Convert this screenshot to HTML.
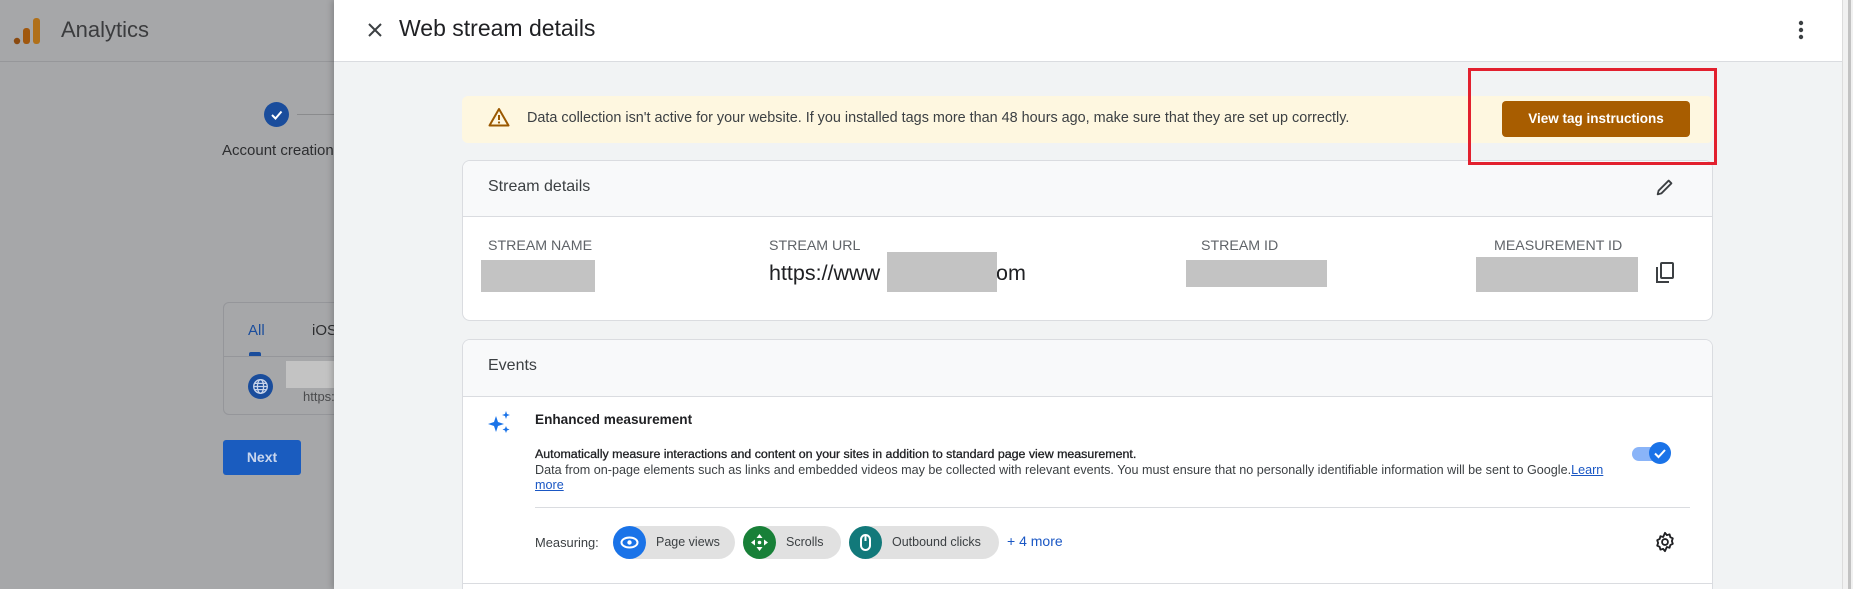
<!DOCTYPE html>
<html style="overflow:hidden"><head><meta charset="utf-8"><style>
*{margin:0;padding:0;box-sizing:border-box}
html,body{width:1853px;height:589px;overflow:hidden}
body{position:relative;font-family:"Liberation Sans",sans-serif;background:#a6a7a9}
.a{position:absolute}
.t{white-space:nowrap}
</style></head><body>
<!-- left dimmed area -->
<div class="a" style="left:0;top:61px;width:334px;height:1px;background:#96979a"></div>
<svg class="a" style="left:12px;top:14px" width="32" height="32" viewBox="0 0 32 32"><circle cx="5" cy="27" r="3.2" fill="#8a4a10"/><rect x="11" y="14" width="7" height="16" rx="3" fill="#a0580f"/><rect x="21" y="4" width="7" height="26" rx="3" fill="#b0701a"/></svg>
<div class="a t" style="left:61px;top:17px;font-size:22px;color:#3b3c3e">Analytics</div>
<div class="a" style="left:264px;top:102px;width:25px;height:25px;border-radius:50%;background:#1a4d9c"></div>
<svg class="a" style="left:264px;top:102px" width="25" height="25"><path d="M8 13l3.5 3.5L17.5 9.5" stroke="#fff" stroke-width="2" fill="none"/></svg>
<div class="a" style="left:297px;top:114px;width:37px;height:1px;background:#8a8b8d"></div>
<div class="a t" style="left:222px;top:142px;font-size:15px;color:#2d2e30">Account creation</div>
<div class="a" style="left:223px;top:302px;width:130px;height:113px;border:1px solid #95969a;border-radius:6px"></div>
<div class="a" style="left:223px;top:356px;width:111px;height:1px;background:#95969a"></div>
<div class="a t" style="left:248px;top:322px;font-size:15px;color:#1a4d9c">All</div>
<div class="a t" style="left:312px;top:322px;font-size:15px;color:#2d2e30">iOS</div>
<div class="a" style="left:249px;top:352px;width:12px;height:4px;background:#1a4d9c;border-radius:2px 2px 0 0"></div>
<svg class="a" style="left:248px;top:374px" width="25" height="25" viewBox="0 0 24 24"><circle cx="12" cy="12" r="12" fill="#1a4d9c"/><g stroke="#c8d4ea" stroke-width="1.3" fill="none"><circle cx="12" cy="12" r="6.5"/><ellipse cx="12" cy="12" rx="3" ry="6.5"/><path d="M5.5 12h13M6.5 9h11M6.5 15h11"/></g></svg>
<div class="a" style="left:286px;top:361px;width:54px;height:27px;background:#c3c3c3"></div>
<div class="a t" style="left:303px;top:389px;font-size:13px;color:#4a4b4d">https:</div>
<div class="a" style="left:223px;top:440px;width:78px;height:35px;background:#1a5cbf;border-radius:3px;color:#c9d6ee;font-size:14px;font-weight:bold;text-align:center;line-height:35px">Next</div>

<!-- panel -->
<div class="a" style="left:334px;top:0;width:1508px;height:589px;background:#f1f3f4;box-shadow:-2px 0 6px rgba(0,0,0,.2)"></div>
<div class="a" style="left:1842px;top:0;width:11px;height:589px;background:#f1f1f1;border-left:1px solid #dcdcdc"></div>
<div class="a" style="left:1848px;top:0;width:3px;height:589px;background:#c2c2c2"></div>
<div class="a" style="left:334px;top:0;width:1508px;height:62px;background:#fff;border-bottom:1px solid #dadce0"></div>
<svg class="a" style="left:366px;top:21px" width="18" height="18"><path d="M3 3l12 12M15 3L3 15" stroke="#3c4043" stroke-width="2"/></svg>
<div class="a t" style="left:399px;top:15px;font-size:23px;color:#202124">Web stream details</div>
<svg class="a" style="left:1795px;top:19px" width="12" height="22"><circle cx="6" cy="4" r="2.2" fill="#3c4043"/><circle cx="6" cy="11" r="2.2" fill="#3c4043"/><circle cx="6" cy="18" r="2.2" fill="#3c4043"/></svg>

<!-- banner -->
<div class="a" style="left:462px;top:96px;width:1251px;height:47px;background:#fef7e0;border-radius:6px"></div>
<svg class="a" style="left:488px;top:107px" width="22" height="20" viewBox="0 0 22 20"><path d="M11 2L20.5 18.5H1.5Z" stroke="#9a5800" stroke-width="2" fill="none" stroke-linejoin="round"/><path d="M11 8v5" stroke="#9a5800" stroke-width="2"/><circle cx="11" cy="15.5" r="1.1" fill="#9a5800"/></svg>
<div class="a t" style="left:527px;top:110px;font-size:14.4px;color:#3c4043">Data collection isn't active for your website. If you installed tags more than 48 hours ago, make sure that they are set up correctly.</div>
<div class="a" style="left:1502px;top:101px;width:188px;height:36px;background:#a85d00;border-radius:4px;color:#fff;font-size:13.5px;font-weight:bold;text-align:center;line-height:36px">View tag instructions</div>

<!-- stream details card -->
<div class="a" style="left:462px;top:160px;width:1251px;height:161px;background:#fff;border:1px solid #dadce0;border-radius:8px;overflow:hidden">
  <div style="height:56px;background:#f8f9fa;border-bottom:1px solid #dadce0"></div>
</div>
<div class="a t" style="left:488px;top:178px;font-size:16px;color:#3c4043">Stream details</div>
<svg class="a" style="left:1654px;top:176px" width="22" height="22" viewBox="0 0 24 24"><path d="M4 20l1-4L16 5l3 3L8 19z" stroke="#3c4043" stroke-width="2" fill="none" stroke-linejoin="round"/></svg>
<div class="a t" style="left:488px;top:238px;font-size:14.2px;color:#5f6368">STREAM NAME</div>
<div class="a t" style="left:769px;top:238px;font-size:14.2px;color:#5f6368">STREAM URL</div>
<div class="a t" style="left:1201px;top:238px;font-size:14.2px;color:#5f6368">STREAM ID</div>
<div class="a t" style="left:1494px;top:238px;font-size:14.2px;color:#5f6368">MEASUREMENT ID</div>
<div class="a" style="left:481px;top:260px;width:114px;height:32px;background:#c3c3c3"></div>
<div class="a t" style="left:769px;top:261px;font-size:21.5px;color:#202124">https://www</div>
<div class="a t" style="left:996px;top:261px;font-size:21.5px;color:#202124">om</div>
<div class="a" style="left:887px;top:252px;width:110px;height:40px;background:#c3c3c3"></div>
<div class="a" style="left:1186px;top:260px;width:141px;height:27px;background:#c3c3c3"></div>
<div class="a" style="left:1476px;top:257px;width:162px;height:35px;background:#c3c3c3"></div>
<svg class="a" style="left:1654px;top:261px" width="22" height="24" viewBox="0 0 22 24"><rect x="7" y="2" width="12" height="15" rx="1" stroke="#3c4043" stroke-width="2" fill="none"/><path d="M3 6v15h12" stroke="#3c4043" stroke-width="2" fill="none"/></svg>

<div class="a" style="left:1468px;top:68px;width:249px;height:97px;border:3px solid #e2202e"></div>

<!-- events card -->
<div class="a" style="left:462px;top:339px;width:1251px;height:250px;background:#fff;border:1px solid #dadce0;border-bottom:none;border-radius:8px 8px 0 0;overflow:hidden">
  <div style="height:57px;background:#f8f9fa;border-bottom:1px solid #dadce0"></div>
</div>
<div class="a t" style="left:488px;top:357px;font-size:16px;color:#3c4043">Events</div>
<svg class="a" style="left:487px;top:410px" width="26" height="26" viewBox="0 0 26 26"><path d="M9 6l2 6 6 2-6 2-2 6-2-6-6-2 6-2z" fill="#1a73e8"/><path d="M19 1l1 3 3 1-3 1-1 3-1-3-3-1 3-1z" fill="#1a73e8"/><path d="M19 16l1 2.5 2.5 1-2.5 1-1 2.5-1-2.5-2.5-1 2.5-1z" fill="#1a73e8"/></svg>
<div class="a t" style="left:535px;top:412px;font-size:13.6px;font-weight:bold;color:#202124">Enhanced measurement</div>
<div class="a t" style="left:535px;top:447px;font-size:12.4px;color:#202124;-webkit-text-stroke:0.3px #202124">Automatically measure interactions and content on your sites in addition to standard page view measurement.</div>
<div class="a t" style="left:535px;top:463px;font-size:12.6px;color:#3c4043">Data from on-page elements such as links and embedded videos may be collected with relevant events. You must ensure that no personally identifiable information will be sent to Google.<span style="color:#1a57c4;text-decoration:underline">Learn</span></div>
<div class="a t" style="left:535px;top:478px;font-size:12.6px;color:#1a57c4;text-decoration:underline">more</div>
<div class="a" style="left:1632px;top:447px;width:34px;height:14px;border-radius:7px;background:#8ab4f8"></div>
<div class="a" style="left:1649px;top:442px;width:22px;height:22px;border-radius:50%;background:#1a73e8"></div>
<svg class="a" style="left:1649px;top:442px" width="22" height="22"><path d="M6 11.5l3.5 3.5L16 8" stroke="#fff" stroke-width="2" fill="none"/></svg>
<div class="a" style="left:535px;top:507px;width:1155px;height:1px;background:#dadce0"></div>
<div class="a t" style="left:535px;top:535px;font-size:12.9px;color:#3c4043">Measuring:</div>
<div class="a" style="left:613px;top:526px;width:122px;height:33px;border-radius:17px;background:#e1e1e1"></div>
<div class="a" style="left:613px;top:526px;width:33px;height:33px;border-radius:50%;background:#1a73e8"></div>
<svg class="a" style="left:613px;top:526px" width="33" height="33"><ellipse cx="16.5" cy="16.5" rx="8" ry="5" stroke="#fff" stroke-width="2" fill="none"/><circle cx="16.5" cy="16.5" r="2.2" fill="#fff"/></svg>
<div class="a t" style="left:656px;top:535px;font-size:12.5px;color:#3c4043">Page views</div>
<div class="a" style="left:743px;top:526px;width:98px;height:33px;border-radius:17px;background:#e1e1e1"></div>
<div class="a" style="left:743px;top:526px;width:33px;height:33px;border-radius:50%;background:#188038"></div>
<svg class="a" style="left:743px;top:526px" width="33" height="33"><path d="M16.5 8l3 4h-6zM16.5 25l3-4h-6zM8 16.5l4-3v6zM25 16.5l-4-3v6z" fill="#fff"/><circle cx="16.5" cy="16.5" r="1.8" fill="#fff"/></svg>
<div class="a t" style="left:786px;top:535px;font-size:12.5px;color:#3c4043">Scrolls</div>
<div class="a" style="left:849px;top:526px;width:150px;height:33px;border-radius:17px;background:#e1e1e1"></div>
<div class="a" style="left:849px;top:526px;width:33px;height:33px;border-radius:50%;background:#12797a"></div>
<svg class="a" style="left:849px;top:526px" width="33" height="33"><rect x="12" y="9" width="9" height="15" rx="4.5" stroke="#fff" stroke-width="2" fill="none"/><path d="M16.5 10v5" stroke="#fff" stroke-width="2"/></svg>
<div class="a t" style="left:892px;top:535px;font-size:12.5px;color:#3c4043">Outbound clicks</div>
<div class="a t" style="left:1007px;top:533px;font-size:14px;color:#1a57c4">+ 4 more</div>
<svg class="a" style="left:1654px;top:531px" width="22" height="22" viewBox="0 0 24 24"><path d="M12 2l2 2.5 3-.8.8 3 2.7 1.3-1 3 1 3-2.7 1.3-.8 3-3-.8L12 22l-2-2.5-3 .8-.8-3-2.7-1.3 1-3-1-3 2.7-1.3.8-3 3 .8z" stroke="#202124" stroke-width="2" fill="none" stroke-linejoin="round"/><circle cx="12" cy="12" r="3.2" stroke="#202124" stroke-width="2" fill="none"/></svg>
<div class="a" style="left:462px;top:583px;width:1251px;height:1px;background:#dadce0"></div>
</body></html>
